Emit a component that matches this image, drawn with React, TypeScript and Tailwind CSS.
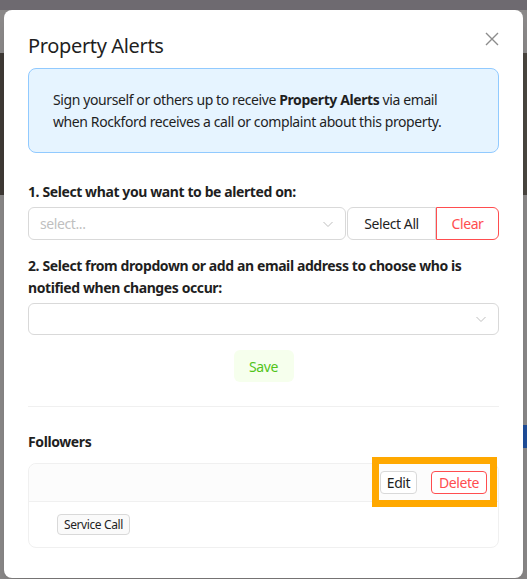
import React from 'react';

const font = { fontFamily: '"Noto Sans", "Open Sans", sans-serif' };

const Chevron: React.FC = () => (
  <svg width="12" height="12" viewBox="0 0 12 12" fill="none" className="text-[#bfbfbf]">
    <path d="M1.5 4l4.5 4.5L10.5 4" stroke="currentColor" strokeWidth="1" />
  </svg>
);

const PropertyAlertsModal: React.FC = () => {
  return (
    <div className="rounded-lg bg-white px-6 pt-5 pb-[30px] tracking-[-0.4px] shadow-xl">
      <div className="flex items-start justify-between">
        <h2 className="pt-[2px] text-[20px] font-normal leading-[28px] tracking-[-0.35px] text-[#1f1f1f]">
          Property Alerts
        </h2>
        <button className="mt-[1px] mr-[-1px] text-[#8c8c8c]">
          <svg width="16" height="16" viewBox="0 0 16 16">
            <path d="M2 2l12 12M14 2L2 14" stroke="currentColor" strokeWidth="1.4" />
          </svg>
        </button>
      </div>

      <div className="mt-[8px] rounded-lg border border-[#91caff] bg-[#e6f4ff] px-6 pt-[20px] pb-[19px] text-[14px] leading-[22px] text-[#1f1f1f]">
        Sign yourself or others up to receive <b>Property Alerts</b> via email
        <br />
        when Rockford receives a call or complaint about this property.
      </div>

      <p className="mt-[28px] text-[14px] font-bold leading-[22px] text-[#1f1f1f]">
        1. Select what you want to be alerted on:
      </p>
      <div className="mt-[4px] flex h-[33px]">
        <div className="flex flex-1 items-center justify-between rounded-md border border-[#d9d9d9] pl-[11px] pr-[11px] text-[14px] text-[#bfbfbf]">
          <span>select...</span>
          <Chevron />
        </div>
        <button className="ml-[1px] w-[89px] rounded-l-md border border-[#d9d9d9] text-[14px] text-[#1f1f1f]">
          Select All
        </button>
        <button className="w-[63px] rounded-r-md border border-[#ff4d4f] text-[14px] text-[#ff4d4f]">
          Clear
        </button>
      </div>

      <p className="mt-[15px] text-[14px] font-bold leading-[22px] text-[#1f1f1f]">
        2. Select from dropdown or add an email address to choose who is
        <br />
        notified when changes occur:
      </p>
      <div className="mt-[4px] flex h-[32px] items-center justify-end rounded-md border border-[#d9d9d9] pr-[11px]">
        <Chevron />
      </div>

      <div className="mt-[15px] flex justify-center">
        <button className="h-[32px] w-[60px] rounded-md bg-[#f6ffed] text-[14px] text-[#52c41a]">Save</button>
      </div>

      <div className="mt-[24px] h-px bg-[#f0f0f0]" />

      <p className="mt-[24px] text-[14px] font-bold leading-[22px] text-[#1f1f1f]">Followers</p>

      <div className="mt-[10px] rounded-lg border border-[#f0f0f0]">
        <div className="flex h-[38px] items-center justify-end rounded-t-lg border-b border-[#f0f0f0] bg-[#fcfcfc] pr-[11px]">
          <div className="relative flex gap-[14px]">
            <div className="pointer-events-none absolute -left-[8px] -right-[10px] -top-[14px] -bottom-[13px] border-[7px] border-[#ffa800]" />
            <button className="h-[23px] w-[37px] rounded border border-[#d9d9d9] bg-white text-[14px] leading-[21px] text-[#1f1f1f]">
              Edit
            </button>
            <button className="h-[23px] w-[56px] rounded border border-[#ff4d4f] bg-white text-[14px] leading-[21px] text-[#ff4d4f]">
              Delete
            </button>
          </div>
        </div>
        <div className="flex px-[28px] py-[12px]">
          <span className="rounded border border-[#d9d9d9] bg-[#fafafa] px-[6px] text-[12px] leading-[19px] text-[#1f1f1f]">
            Service Call
          </span>
        </div>
      </div>
    </div>
  );
};

export default function App() {
  return (
    <div className="relative flex h-[579px] w-[527px] flex-col overflow-hidden bg-[#8a8888]" style={font}>
      {/* dimmed page behind the modal */}
      <div className="h-[10px] bg-[#6e6a70]" />
      <div className="h-[43px]" />
      <div className="flex h-[142px] justify-between">
        <div className="w-[6px] bg-[#3f3a36]" />
        <div className="w-[8px] bg-[#4a4640]" />
      </div>
      <div className="h-[230px]" />
      <div className="flex h-[23px] justify-end">
        <div className="w-[6px] bg-[#1f4e9a]" />
      </div>

      <div className="absolute left-[4px] top-[10px] w-[519px]">
        <PropertyAlertsModal />
      </div>
    </div>
  );
}
